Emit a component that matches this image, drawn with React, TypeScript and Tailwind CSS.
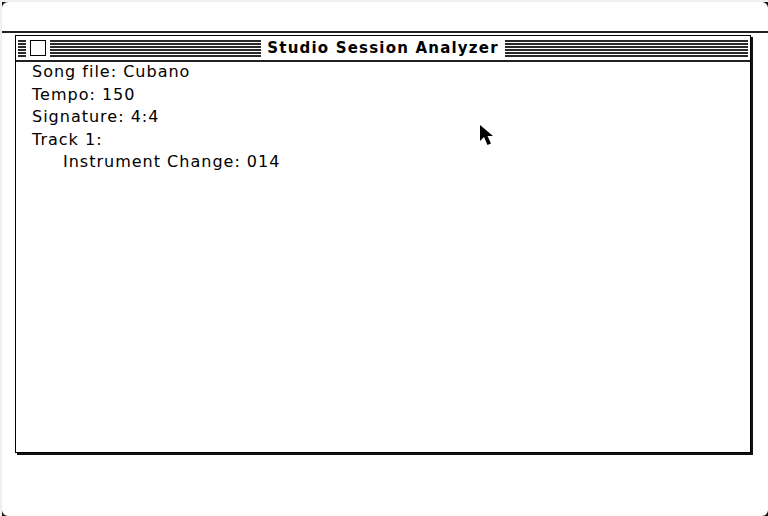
import React from "react";

const Stripes = ({ className = "" }: { className?: string }) => (
  <div className={`flex flex-col gap-px ${className}`}>
    {Array.from({ length: 6 }).map((_, i) => (
      <div key={i} className="h-[2px] bg-[#2a2a2a]" />
    ))}
  </div>
);

const lines = [
  { text: "Song file: Cubano", indent: false },
  { text: "Tempo: 150", indent: false },
  { text: "Signature: 4:4", indent: false },
  { text: "Track 1:", indent: false },
  { text: "Instrument Change: 014", indent: true },
];

const Corner = ({ className }: { className: string }) => (
  <svg className={`absolute ${className}`} width="6" height="6" viewBox="0 0 6 6">
    <path d="M0 0H6C3 0 0 3 0 6Z" fill="#111" />
  </svg>
);

const App = () => {
  return (
    <div className="relative w-[768px] h-[516px] overflow-hidden bg-white font-['DejaVu_Sans',sans-serif] text-black">
      <div className="absolute inset-x-0 top-0 h-[2px] bg-[#f0f0f0]" />
      <div className="absolute inset-y-0 left-0 w-[2px] bg-[#f0f0f0]" />
      <Corner className="left-[2px] top-[2px]" />
      <Corner className="right-0 top-[2px] rotate-90" />
      <Corner className="left-[2px] bottom-0 -rotate-90" />
      <Corner className="right-0 bottom-0 rotate-180" />

      {/* menu bar */}
      <div className="h-[33px] border-b-2 border-[#222] ml-[1px]" />

      {/* window */}
      <div className="ml-[15px] mt-[2px] w-[736px] h-[418px] border border-black shadow-[2px_2px_0_#111] flex flex-col">
        <div className="h-[26px] border-b-2 border-[#222] flex items-center px-[2px] shrink-0">
          <div className="flex-1 flex items-center gap-[2px]">
            <Stripes className="w-[8px]" />
            <div className="w-[16px] h-[16px] border border-black bg-white mx-[2px]" />
            <Stripes className="flex-1" />
          </div>
          <div className="px-[6px] pt-px text-[15px] font-bold leading-none tracking-[1.2px]">
            Studio Session Analyzer
          </div>
          <Stripes className="flex-1" />
        </div>
        <div className="-mt-[1px] pl-[16px] text-[16px] leading-[22.5px] tracking-[1px]">
          {lines.map((l, i) => (
            <div key={i} className={l.indent ? "pl-[31px]" : ""}>
              {l.text}
            </div>
          ))}
        </div>
      </div>

      {/* cursor */}
      <svg className="absolute left-[479px] top-[124px]" width="16" height="23" viewBox="0 0 16 23">
        <path d="M1 1V17L5 13L8.5 21L12 19.5L8.5 12H14Z" fill="#000" />
      </svg>
    </div>
  );
};

export default App;
